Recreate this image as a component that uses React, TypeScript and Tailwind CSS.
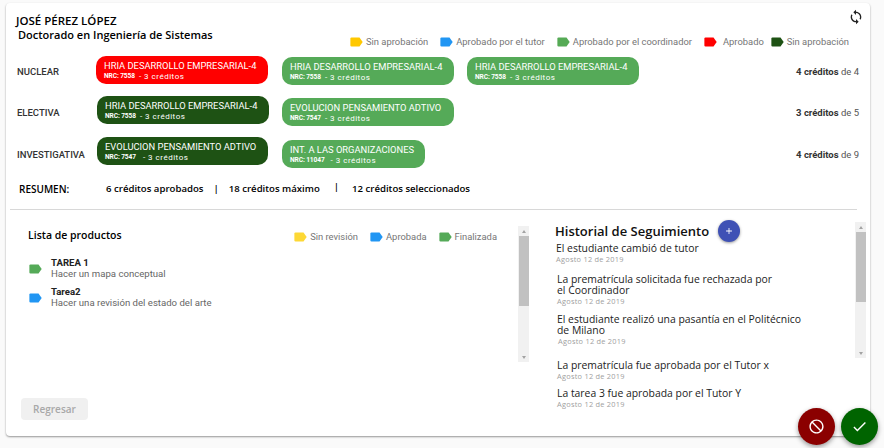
import React from "react";
import { MdSync, MdAdd, MdCheck, MdBlock } from "react-icons/md";

function Tag({ color, className = "" }: { color: string; className?: string }) {
  return (
    <svg width="13" height="10" viewBox="0 0 13 10" className={"shrink-0 " + className}>
      <path d="M1.5 0.5H9.5L12.7 5L9.5 9.5H1.5Q0.4 9.5 0.4 8.4V1.6Q0.4 0.5 1.5 0.5Z" fill={color} />
    </svg>
  );
}

function Chip({ title, nrc, color, w, gap = "ml-[4px]", mt = "mt-0", extra = "" }: { title: string; nrc: string; color: string; w: string; gap?: string; mt?: string; extra?: string }) {
  return (
    <div className={`${color} ${w} ${mt} ${extra} h-[28px] rounded-[10px] pl-[8px] text-white shrink-0 flex flex-col justify-center`}>
      <div className="text-[9.35px] leading-[12px] whitespace-nowrap font-['Roboto',sans-serif]">{title}</div>
      <div className="text-[8px] leading-[9px] whitespace-nowrap font-['Roboto',sans-serif] flex items-center">
        <b className="text-[6.6px] tracking-[-0.1px]">NRC: {nrc}</b>
        <span className={`${gap} tracking-[0.5px]`}>- 3 créditos</span>
      </div>
    </div>
  );
}

function Row({ label, a, n, h, labelMt, children }: { label: string; a: number; n: number; h: string; labelMt: string; children: React.ReactNode }) {
  return (
    <div className={`flex ${h} font-['Roboto',sans-serif]`}>
      <div className={`w-[80px] ml-[11px] ${labelMt} text-[9.5px] leading-[12px] font-medium text-[#333] shrink-0`}>{label}</div>
      <div className="flex gap-[13px] flex-1 items-start">{children}</div>
      <div className={`mr-[11px] ${labelMt} text-[9.5px] leading-[12px] text-[#555] shrink-0`}>
        <b className="font-bold text-[#333]">{a} créditos</b> de {n}
      </div>
    </div>
  );
}

function Legend({ color, text, className = "" }: { color: string; text: string; className?: string }) {
  return (
    <div className={"flex items-center gap-[3px] whitespace-nowrap " + className}>
      <Tag color={color} />
      <span>{text}</span>
    </div>
  );
}

function ScrollBar({ className = "" }: { className?: string }) {
  return (
    <div className={"w-[11px] h-[136px] bg-[#f1f1f1] flex flex-col items-center justify-between shrink-0 " + className}>
      <div className="h-[10px] flex items-center justify-center">
        <div className="w-0 h-0 border-x-[2.5px] border-x-transparent border-b-[3px] border-b-[#a3a3a3]" />
      </div>
      <div className="w-[10px] h-[70px] bg-[#c1c1c1] mb-auto" />
      <div className="h-[10px] flex items-center justify-center">
        <div className="w-0 h-0 border-x-[2.5px] border-x-transparent border-t-[3px] border-t-[#a3a3a3]" />
      </div>
    </div>
  );
}

function Hist({ text, className = "", dateClass = "" }: { text: React.ReactNode; className?: string; dateClass?: string }) {
  return (
    <div className={className}>
      <div className="text-[10.4px] leading-[11px] text-[#222] font-['Open_Sans',sans-serif]">{text}</div>
      <div className={"text-[7.4px] leading-[9px] mt-[1px] tracking-[0.25px] text-[#a0a0a0] font-['Open_Sans',sans-serif] " + dateClass}>Agosto 12 de 2019</div>
    </div>
  );
}

export default function App() {
  const heading = "font-['Open_Sans',sans-serif]";
  return (
    <div className="relative w-[884px] h-[448px] overflow-hidden bg-[#fafafa] pt-[3px] pl-[6px]">
      <div className="w-[864px] h-[433px] bg-white rounded-[4px] shadow-[0_1px_2px_rgba(0,0,0,0.4)] flex flex-col">
        {/* header */}
        <div className="flex h-[53px] shrink-0">
          <div className={`${heading} pl-[10px] pt-[11px] text-black w-[340px] shrink-0`}>
            <div className="text-[11.5px] leading-[14px] font-semibold">JOSÉ PÉREZ LÓPEZ</div>
            <div className="text-[11px] leading-[14px] font-semibold ml-[2px]">Doctorado en Ingeniería de Sistemas</div>
          </div>
          <div className="flex-1 flex flex-col items-end min-w-0">
            <MdSync className="text-[16px] text-[#222] mt-[6px] mr-[6px]" />
            <div className="flex items-center mt-[11px] text-[9.4px] leading-[12px] text-[#757575] font-['Roboto',sans-serif] mr-[21px]">
              <Legend color="#ffc800" text="Sin aprobación" />
              <Legend color="#2196f3" text="Aprobado por el tutor" className="ml-[12px]" />
              <Legend color="#55aa55" text="Aprobado por el coordinador" className="ml-[12px]" />
              <Legend color="#ff0000" text="Aprobado" className="ml-[12px] gap-[6px]" />
              <Legend color="#1e5214" text="Sin aprobación" className="ml-[7px]" />
            </div>
          </div>
        </div>
        {/* rows */}
        <Row label="NUCLEAR" a={4} n={4} h="h-[40px]" labelMt="mt-[10px]">
          <Chip title="HRIA DESARROLLO EMPRESARIAL-4" nrc="7558" color="bg-[#ff0000]" w="w-[172px]" extra="-ml-[1px] mr-[1px]" />
          <Chip title="HRIA DESARROLLO EMPRESARIAL-4" nrc="7558" color="bg-[#55aa58]" w="w-[172px]" mt="mt-[1px]" />
          <Chip title="HRIA DESARROLLO EMPRESARIAL-4" nrc="7558" color="bg-[#55aa58]" w="w-[172px]" mt="mt-[1px]" />
        </Row>
        <Row label="ELECTIVA" a={3} n={5} h="h-[41px]" labelMt="mt-[11px]">
          <Chip title="HRIA DESARROLLO EMPRESARIAL-4" nrc="7558" color="bg-[#1e5214]" w="w-[172px]" />
          <Chip title="EVOLUCION PENSAMIENTO ADTIVO" nrc="7547" color="bg-[#55aa58]" w="w-[172px]" mt="mt-[2px]" />
        </Row>
        <Row label="INVESTIGATIVA" a={4} n={9} h="h-[42px]" labelMt="mt-[12px]">
          <Chip title="EVOLUCION PENSAMIENTO ADTIVO" nrc="7547" gap="ml-[7px]" color="bg-[#1e5214]" w="w-[171px]" extra="mr-[1px]" />
          <Chip title="INT. A LAS ORGANIZACIONES" nrc="11047" gap="ml-[6px]" color="bg-[#55aa58]" w="w-[143px]" mt="mt-[3px]" />
        </Row>
        {/* resumen */}
        <div className={`${heading} flex items-center h-[20px] shrink-0 text-[9.6px] font-semibold text-black`}>
          <div className="ml-[13px] w-[87px] text-[10px]">RESUMEN:</div>
          <span>6 créditos aprobados</span>
          <span className="ml-[10px]">|</span>
          <span className="ml-[10px]">18 créditos máximo</span>
          <span className="ml-[14px] -mt-[3px]">|</span>
          <span className="ml-[13px]">12 créditos seleccionados</span>
        </div>
        {/* divider */}
        <div className="h-[1px] bg-[#d8d8d8] ml-[4px] w-[847px] mt-[10px] shrink-0" />
        {/* lower */}
        <div className="flex flex-1 relative">
          <div className="w-[524px] shrink-0 flex flex-col">
            <div className="flex pl-[22px] pt-[16px] h-[152px]">
              <div className="flex-1">
                <div className="flex justify-between">
                  <div className={`${heading} text-[10.5px] leading-[14px] font-semibold text-black mt-[2px]`}>Lista de productos</div>
                  <div className="flex items-center h-[14px] mt-[4px] mr-[21px] text-[9.4px] text-[#757575] font-['Roboto',sans-serif]">
                    <Legend color="#fdd835" text="Sin revisión" />
                    <Legend color="#2196f3" text="Aprobada" className="ml-[12px]" />
                    <Legend color="#55aa58" text="Finalizada" className="ml-[12px]" />
                  </div>
                </div>
                <div className="flex items-center mt-[13px] font-['Roboto',sans-serif] ml-[1px]">
                  <Tag color="#55aa58" />
                  <div className="ml-[9px]">
                    <div className="text-[9.6px] leading-[11px] font-bold text-[#222]">TAREA 1</div>
                    <div className="text-[9.6px] leading-[12px] text-[#666]">Hacer un mapa conceptual</div>
                  </div>
                </div>
                <div className="flex items-center mt-[6px] font-['Roboto',sans-serif] ml-[1px]">
                  <Tag color="#2196f3" />
                  <div className="ml-[9px]">
                    <div className="text-[9.6px] leading-[11px] font-bold text-[#222]">Tarea2</div>
                    <div className="text-[9.6px] leading-[12px] text-[#666]">Hacer una revisión del estado del arte</div>
                  </div>
                </div>
              </div>
              <ScrollBar className="mr-[1px]" />
            </div>
            <button className={`${heading} ml-[15px] mt-[36px] w-[67px] h-[22px] rounded-[4px] bg-[#f0f0f0] text-[10px] font-semibold text-[#a8a8a8]`}>Regresar</button>
          </div>
          <div className="flex-1 flex pl-[25px] min-w-0">
            <div className="w-[300px] shrink-0">
              <div className="flex items-center h-[22px] mt-[10px]">
                <div className={`${heading} text-[13px] leading-[18px] font-semibold text-[#111] whitespace-nowrap`}>Historial de Seguimiento</div>
                <div className="w-[22px] h-[22px] rounded-full bg-[#3f51b5] ml-[9px] flex items-center justify-center shadow-[0_1px_3px_rgba(0,0,0,0.4)]">
                  <MdAdd className="text-white text-[10px]" />
                </div>
              </div>
              <Hist text="El estudiante cambió de tutor" className="ml-[1px] mt-[1px]" />
              <Hist text={<>La prematrícula solicitada fue rechazada por<br />el Coordinador</>} className="mt-[10px] ml-[2px]" />
              <Hist text={<>El estudiante realizó una pasantía en el Politécnico<br />de Milano</>} className="mt-[8px] ml-[2px]" dateClass="ml-[1px]" />
              <Hist text="La prematrícula fue aprobada por el Tutor x" className="mt-[14px] ml-[2px]" />
              <Hist text="La tarea 3 fue aprobada por el Tutor Y" className="mt-[7px] ml-[2px]" />
            </div>
            <ScrollBar className="mt-[12px]" />
          </div>
        </div>
      </div>
      {/* FABs */}
      <div className="absolute left-[798px] top-[408px] flex gap-[6px]">
        <div className="w-[37px] h-[37px] rounded-full bg-[#8b0000] flex items-center justify-center shadow-[0_2px_5px_rgba(0,0,0,0.4)]">
          <MdBlock className="text-white text-[17px] -scale-x-100" />
        </div>
        <div className="w-[37px] h-[37px] rounded-full bg-[#006400] flex items-center justify-center shadow-[0_2px_5px_rgba(0,0,0,0.4)]">
          <MdCheck className="text-white text-[17px]" />
        </div>
      </div>
    </div>
  );
}
